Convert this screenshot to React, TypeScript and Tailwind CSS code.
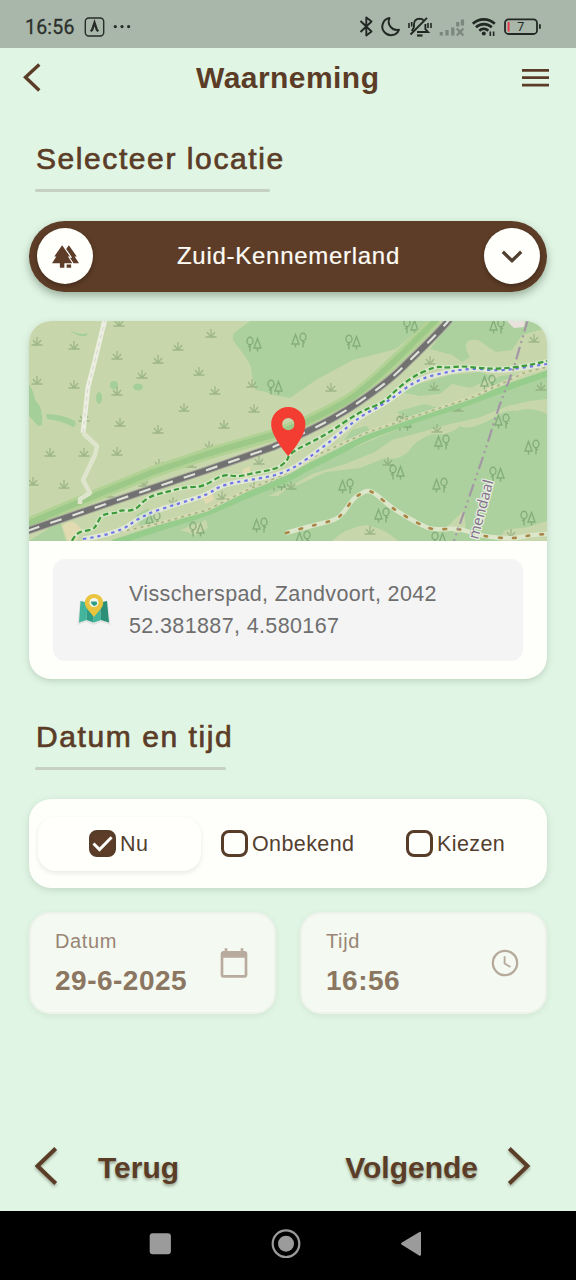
import React from "react";

const SANS = "font-['Liberation_Sans',Arial,sans-serif]";

type Pt = [number, number];

const grass: Pt[] = [
  [37, 341], [74, 345], [117, 355], [158, 359], [142, 374], [178, 346], [211, 333], [199, 371], [215, 390], [184, 407], [37, 380],
  [74, 384], [117, 391], [120, 422], [158, 429], [224, 424], [50, 452], [84, 452], [117, 451], [159, 463], [209, 445], [254, 408],
  [33, 481], [64, 484], [109, 493], [144, 482], [191, 463], [222, 495], [173, 501], [84, 417], [252, 383], [331, 387], [374, 383],
  [437, 428], [458, 407], [434, 386], [388, 461], [403, 417], [534, 338], [541, 386], [291, 485], [511, 533], [370, 530], [259, 460],
  [119, 322], [254, 486], [430, 360],
];

const trees: [number, number, boolean][] = [
  [254, 344, false], [275, 387, false], [299, 340, true], [353, 342, false], [497, 326, true], [488, 382, true], [442, 442, true],
  [502, 421, true], [532, 447, true], [397, 472, false], [346, 486, true], [497, 474, false], [440, 485, true], [382, 515, true],
  [528, 518, false], [260, 525, true], [197, 529, false], [303, 538, true], [439, 539, false], [153, 519, true], [278, 483, false],
  [411, 326, false], [404, 423, false],
];

function Grass({ x, y }: { x: number; y: number }) {
  return <path d={`M${x - 5.5} ${y + 4}h11M${x} ${y + 4}v-8M${x} ${y + 4}l-4 -5M${x} ${y + 4}l4 -5`} />;
}

function Trees({ x, y, flip }: { x: number; y: number; flip: boolean }) {
  return (
    <g transform={`translate(${x} ${y}) scale(${flip ? -1 : 1} 1)`}>
      <ellipse cx="-4" cy="-3" rx="3" ry="3.8" />
      <path d="M-4 0.5V7.5M-6 2l2 1.5M3.5 -5.5L0 4H7zM3.5 4v3.5" />
    </g>
  );
}

// Rounds the corners of a polyline by running quadratic curves through its segment midpoints.
function smooth(points: Pt[]): string {
  const last = points[points.length - 1];
  let d = `M${points[0][0]} ${points[0][1]}`;
  for (let i = 1; i < points.length - 1; i++) {
    const [x, y] = points[i];
    const [nx, ny] = points[i + 1];
    d += `Q${x} ${y} ${(x + nx) / 2} ${(y + ny) / 2}`;
  }
  return `${d}L${last[0]} ${last[1]}`;
}

const RAIL = "M27 531L103 505L153 488L207 470L273 447L306 432C325 423 343 413 359 402C375 391 388 382 402 368C416 354 434 338 450 319";
const BANK = "M27 524L77 503L153 472L207 454L273 435L306 422C325 413 340 406 353 397C372 383 388 367 400 356L437 319";
const SOUTH = smooth([[113, 543], [153, 530], [207, 513], [240, 498], [290, 478], [306, 468], [339, 452], [366, 437], [419, 418], [473, 401], [513, 385], [549, 373]]);
const GREEN = smooth([[72, 541], [76, 532], [93, 530], [97, 524], [102, 514], [118, 513], [120, 510], [135, 511], [147, 497], [170, 491], [186, 487], [203, 487], [223, 474], [238, 477], [253, 473], [277, 469], [288, 460], [289, 453], [326, 435], [359, 412], [383, 403], [396, 390], [412, 377], [436, 366], [446, 368], [460, 366], [480, 368], [499, 369], [525, 366], [547, 361]]);
const BLUE = smooth([[83, 539], [117, 534], [143, 515], [180, 503], [207, 495], [223, 484], [270, 477], [290, 470], [306, 460], [336, 437], [359, 417], [386, 403], [416, 380], [446, 372], [473, 368], [499, 371], [520, 368], [547, 364]]);
const FOOT = "M120 532L160 523L207 510L247 490L285 474L319 454L366 433L419 415L473 397L499 385L526 372L547 367";
const TRACK = smooth([[286, 533], [310, 526], [336, 520], [344, 512], [353, 499], [360, 494], [368, 490], [376, 494], [393, 509], [419, 524], [433, 530], [459, 528], [480, 536], [513, 539], [530, 535], [547, 534]]);

function MapView() {
  return (
    <svg viewBox="29 321 518 220" width="518" height="220" className="block shrink-0">
      <rect x="29" y="321" width="518" height="220" fill="#c8d7ab" />
      <g fill="#add19e">
        <path d="M250 321L234 333Q231 338 235 343Q240 349 246 358Q252 366 252 376Q255 386 255 390Q266 391 273 395L290 398L316 380L353 360L396 349L410 337L427 321Z" />
        <path d="M452 321L440 336L430 349L452 355L462 362L470 357Q464 348 467 342Q473 338 480 341L488 347L496 352L512 350L522 335L547 328V321Z" />
        <path d="M110 541L153 532L207 515L240 500L290 480L339 454L419 420L473 403L513 387L547 375V541Z" />
        <path d="M29 541L60 521L66 541ZM136 515L148 508L156 522L140 526ZM400 392L418 384L450 375L480 372L495 377L470 388L452 384L440 394L420 396ZM344 440L352 430L366 426L372 432L360 438ZM396 412L424 404L440 408L410 419ZM485 385L500 376L515 374L505 384Z" />
      </g>
      <g fill="#a5cf99">
        <path d="M29 384Q34 392 35 400Q44 408 42 425L38 426L29 416ZM46 414Q62 414 75 421Q77 426 73 427Q60 420 47 419ZM69 329Q78 336 88 333L86 336Q76 337 69 329Z" />
        <ellipse cx="138" cy="387" rx="5" ry="3.5" />
        <ellipse cx="99" cy="398" rx="3" ry="6" />
        <ellipse cx="114" cy="385" rx="4" ry="4" />
      </g>
      <g fill="#c8d7ab">
        <path d="M286 489L312 474L345 464L375 452L392 440L425 431L450 424L478 418L508 406L530 401L547 399V414Q530 406 517 411Q504 409 490 420Q468 431 460 426Q450 436 432 434Q415 440 408 452Q398 461 385 458L360 468L326 472L300 484Z" />
        <path d="M332 541Q345 528 366 525Q384 528 398 541ZM448 526L464 510L466 530L456 534ZM498 541L505 530L528 527L547 521V541ZM268 496L290 486L278 496Z" />
        <path d="M180 530L206 520L208 528L196 535Z" />
      </g>
      <path d="M62 526Q70 519 77 524L82 530L76 541H68ZM202 497L212 492L214 500L206 504ZM242 470L250 466L250 476L244 480Z" fill="#e2dab1" />
      <path d="M507 321L514 328L524 327L525 321Z" fill="#e9e2dc" />

      <g fill="none" stroke="#7c9a6c" strokeOpacity="0.55" strokeWidth="1.3">
        {grass.map(([x, y], i) => <Grass key={i} x={x} y={y} />)}
      </g>
      <g fill="none" stroke="#6a9a66" strokeOpacity="0.62" strokeWidth="1.4">
        {trees.map(([x, y, f], i) => <Trees key={i} x={x} y={y} flip={f} />)}
      </g>

      <g fill="none" strokeLinejoin="round">
        <path d={BANK} stroke="#b2d295" strokeWidth="12" />
        <path d={BANK} stroke="#9dc988" strokeWidth="6" />
        <path d={SOUTH} stroke="#97cd8c" strokeWidth="6.5" />
        <path d="M105 319L95 360L88 387L83 433" stroke="#eceee2" strokeWidth="4.8" />
        <path d="M105 319L95 360L88 387L83 433" stroke="#d6d7c8" strokeWidth="1" strokeDasharray="4 4" />
        <path d="M83 433L97 446L95 455L83 480L90 493L80 499L80 504" stroke="#dfe5cd" strokeWidth="4.5" />
        <path d={RAIL} stroke="#a9ab9c" strokeWidth="8" />
        <path d={RAIL} stroke="#727172" strokeWidth="6" />
        <path d={RAIL} stroke="#dfe2da" strokeWidth="2.2" strokeDasharray="12 11.5" strokeDashoffset="-1" />
        <path d={FOOT} stroke="#d9dcb9" strokeWidth="3.2" strokeOpacity="0.8" />
        <path d={FOOT} stroke="#a5b580" strokeWidth="1.6" strokeDasharray="3 4" />
        <path d={BLUE} stroke="#eef1ee" strokeWidth="5" strokeOpacity="0.65" />
        <path d={GREEN} stroke="#dcecd2" strokeWidth="4" strokeOpacity="0.7" />
        <path d={BLUE} stroke="#7076ea" strokeWidth="2.2" strokeDasharray="3.2 4" />
        <path d={GREEN} stroke="#3c9a3a" strokeWidth="2.2" strokeDasharray="5.5 3" />
        <path d={TRACK} stroke="#dce6ca" strokeWidth="4.5" />
        <path d={TRACK} stroke="#a98645" strokeWidth="2.6" strokeLinecap="round" strokeDasharray="2.5 11.5" />
        <path d="M528 319L514 367L499 407L483 457L454 541" stroke="#a397a5" strokeWidth="2.2" strokeDasharray="13 4 2 4 2 4" />
      </g>
      <text
        transform="translate(478 540) rotate(-75)"
        className="font-['Noto_Sans',sans-serif]"
        fontSize="14.8"
        fill="#85748a"
        stroke="#e7efe2"
        strokeWidth="2.4"
        strokeLinejoin="round"
        paintOrder="stroke"
      >
        mendaal
      </text>
      <path
        transform="translate(258.9 402.1) scale(2.45)"
        fill="#f43d32"
        d="M12 2C8.13 2 5 5.13 5 9c0 5.25 7 13 7 13s7-7.75 7-13c0-3.87-3.13-7-7-7zm0 9.5a2.5 2.5 0 1 1 0-5 2.5 2.5 0 0 1 0 5z"
      />
    </svg>
  );
}

function StatusBar() {
  return (
    <div className="flex h-12 shrink-0 items-center bg-[#a9b6aa] pl-[25px] pt-[5px]">
      <span className="font-['Roboto',sans-serif] text-[19.5px] leading-6 tracking-[0.2px] text-[#2a302b] [-webkit-text-stroke:0.3px_#2a302b] mt-0.5">16:56</span>
      <svg width="50" height="22" viewBox="84 15 50 22" className="ml-[9px]" fill="none" stroke="#262c27">
        <rect x="85.3" y="17" width="18.4" height="18" rx="3.5" strokeWidth="1.4" />
        <path d="M90.8 30.4l1.4-1.8 2.3-7 2.3 7 1.4 1.8M94.5 22v3.5" strokeWidth="2.3" />
        <g fill="#262c27" stroke="none">
          <circle cx="115.3" cy="25.6" r="1.6" /><circle cx="122" cy="25.6" r="1.6" /><circle cx="128.6" cy="25.6" r="1.6" />
        </g>
      </svg>
      <svg width="186" height="24" viewBox="358 14.5 186 24" className="ml-auto mr-8" fill="none" stroke="#222823" strokeWidth="2">
        <path d="M360.5 20.5L371.5 31L366.3 35V17L371.5 21L360.5 31.5" strokeWidth="1.9" strokeLinejoin="round" />
        <path d="M389.5 17.6a8.6 8.6 0 1 0 9.4 11.7a8.4 8.4 0 0 1 -9.4 -11.7z" strokeWidth="2" strokeLinejoin="round" />
        <g strokeWidth="1.9">
          <path d="M417 31.5h11l-2.6-2.8v-5.2M423.8 20c-2-2.300-6.400-2.300-8.600 0c-1.200 1.400-1.300 3.200-1.300 6.600l-2 4" />
          <path d="M427 17.300L410.500 34" />
          <path d="M417 35h5.500" strokeWidth="2.2" />
          <path d="M409 22.400v5M411.700 21.500v4.500M428 22.400v5M431 22.400v5" strokeWidth="1.6" />
        </g>
        <g stroke="#7b867d" strokeWidth="3.2">
          <path d="M441.300 35v-3.600M447 35v-5.500M452.800 35v-8M457.800 26v-4.500M462.500 25v-6" />
          <path d="M456.800 28l6.600 7M463.400 28l-6.600 7" strokeWidth="2.200" />
        </g>
        <g strokeWidth="2.6">
          <path d="M472.800 23.300c6.200-5.900 15.800-5.900 22 0" />
          <path d="M475.900 26.800c4.500-4.300 11.400-4.300 15.900 0" />
          <path d="M479.300 30.200c2.600-2.500 6.400-2.500 9 0" />
          <circle cx="483.800" cy="33" r="2" fill="#222823" stroke="none" />
          <path d="M490.300 31v4.600M493.600 31v4.600" strokeWidth="1.600" />
        </g>
        <rect x="505" y="18.900" width="32" height="14.600" rx="3.600" strokeWidth="1.800" />
        <path d="M508.600 21.500v9.500" stroke="#e83b4e" strokeWidth="2" />
        <path d="M539.900 23.700v4.600" strokeWidth="1.800" />
        <text x="517.300" y="30.900" fontSize="12.500" fill="#222823" stroke="none" className="font-['Roboto',sans-serif]">7</text>
      </svg>
    </div>
  );
}

function Heading({ text, line }: { text: string; line: string }) {
  return (
    <div className="flex h-[52px] flex-col pl-[6px]">
      <h2 className="h-[35px] whitespace-nowrap pl-px text-[30px] leading-[35px] tracking-[1.58px] text-[#5b3d27] [-webkit-text-stroke:0.7px_#5b3d27]">{text}</h2>
      <div className={`mt-[13px] h-[3px] rounded-full bg-[#c5d0c0] ${line}`} />
    </div>
  );
}

function Option({ label, checked = false }: { label: string; checked?: boolean }) {
  return (
    <>
      <span className={`flex size-[27px] shrink-0 items-center justify-center rounded-[8px] border-[3px] border-[#573c28] ${checked ? "bg-[#5d3d27]" : ""}`}>
        {checked && (
          <svg width="21" height="21" viewBox="0 0 21 21" fill="none" stroke="#fffffb" strokeWidth="2.9" className="shrink-0">
            <path d="M1.5 10.5L7.5 16.6L19.6 4.2" />
          </svg>
        )}
      </span>
      <span className="ml-1 mt-px whitespace-nowrap text-[21.5px] leading-7 tracking-[0.4px] text-[#54402f]">{label}</span>
    </>
  );
}

function Field({ label, value, children }: { label: string; value: string; children: React.ReactNode }) {
  return (
    <div className="flex h-[102px] w-[247px] items-center justify-between rounded-[21px] border-2 border-[#edf3ea] bg-[#f4f9f1] pl-6 pr-6 shadow-[0_2px_6px_rgba(60,90,50,0.09)]">
      <div className="-mt-px whitespace-nowrap">
        <div className="text-[20px] leading-6 tracking-[0.65px] text-[#988575]">{label}</div>
        <div className="mt-[12px] text-[28px] font-bold leading-8 tracking-[0.5px] text-[#8b7661]">{value}</div>
      </div>
      {children}
    </div>
  );
}

export default function App() {
  return (
    <div className={`flex h-[1280px] w-[576px] flex-col overflow-hidden bg-[#e1f5e4] ${SANS}`}>
      <StatusBar />
      <header className="flex h-[60px] shrink-0 items-center pl-[22px] pr-[27px]">
        <svg width="20" height="30" viewBox="0 0 20 30" fill="none" stroke="#5b3d27" strokeWidth="3.4">
          <path d="M17.3 1.5L3.5 14.3L17.3 27.5" />
        </svg>
        <h1 className="ml-[154px] text-[30px] font-bold leading-9 tracking-[0.45px] text-[#5b3d27]">Waarneming</h1>
        <svg width="27" height="20" viewBox="0 0 27 20" fill="#5b3d27" className="-mt-px ml-auto">
          <path d="M0 1h27v2.800H0zM0 8.300h27v2.800H0zM0 15.800h27v2.800H0z" />
        </svg>
      </header>

      <main className="flex flex-1 flex-col px-[29px] pt-[33px]">
        <Heading text="Selecteer locatie" line="w-[235px]" />

        <button className="mt-[28px] flex h-[70.5px] shrink-0 items-center justify-between rounded-full bg-[#5d3d27] pl-2 pr-[7px] shadow-[0_4px_8px_rgba(40,60,40,0.38)]">
          <span className="flex size-14 items-center justify-center rounded-full bg-[#fffffc] shadow-[0_2px_5px_rgba(0,0,0,0.3)]">
            <svg width="27" height="27" viewBox="0 0 24 24" fill="#5d3d27">
              <path d="M16 12L9 2L2 12h1.86L0 18h7v4h4v-4h7l-3.86-6H16zM20.14 12H22L15 2l-2.39 3.41L17.92 13h-1.95l3.22 5H24L20.14 12zM13 19h4v3h-4z" />
            </svg>
          </span>
          <span className="text-[24px] leading-8 tracking-[0.72px] text-[#fdfbf5] [-webkit-text-stroke:0.2px_#fdfbf5]">Zuid-Kennemerland</span>
          <span className="flex size-14 items-center justify-center rounded-full bg-[#fffffc] shadow-[0_2px_5px_rgba(0,0,0,0.3)]">
            <svg width="22" height="14" viewBox="0 0 22 14" fill="none" stroke="#54402f" strokeWidth="3.3" className="mt-0.5">
              <path d="M1.8 1.8L11 10.8L20.2 1.8" />
            </svg>
          </span>
        </button>

        <section className="mt-[29.5px] flex h-[358px] shrink-0 flex-col overflow-hidden rounded-[22px] bg-[#fefffb] shadow-[0_2px_7px_rgba(40,80,50,0.2)]">
          <MapView />
          <div className="mx-6 mt-[18px] flex h-[102px] items-center rounded-xl bg-[#f4f4f4] pl-6">
            <svg width="34" height="34" viewBox="0 0 34 34" className="shrink-0">
              <path d="M3 8L0.5 32L9 29L16.5 32L24 29L33.5 32L30.5 8L23 9.5L16.5 8L10 9.5Z" fill="#e0e4e1" />
              <path d="M3.500 8L2 29.500L9.500 27L10.500 9.500Z" fill="#43b59c" />
              <path d="M10.500 9.500L9.500 27L16.700 29.500V8Z" fill="#2f9d85" />
              <path d="M16.700 8V29.500L24 27L23 9.500Z" fill="#43b59c" />
              <path d="M23 9.500L24 27L32 29.500L30 8Z" fill="#2d8f77" />
              <path d="M17 1C11.500 1 7.800 5 7.800 10C7.800 15 13.500 19 17 24C20.500 19 26.200 15 26.200 10C26.200 5 22.500 1 17 1Z" fill="#e9c43f" />
              <circle cx="17" cy="9.500" r="4.600" fill="#f3f7ee" />
              <path d="M14 8.500h5.500l.8 2.500l-3 2.300l-2.800-2.300z" fill="#2f9d85" />
            </svg>
            <div className="ml-[18px] whitespace-nowrap text-[21.5px] leading-8 tracking-[0.37px] text-[#6e6e6e]">
              <div>Visscherspad, Zandvoort, 2042</div>
              <div>52.381887, 4.580167</div>
            </div>
          </div>
        </section>

        <div className="mt-[40px]">
          <Heading text="Datum en tijd" line="w-[191px]" />
        </div>

        <div className="mt-[28px] flex h-[89px] shrink-0 items-center rounded-[22px] bg-[#fefffb] pl-[9px] shadow-[0_2px_7px_rgba(40,80,50,0.17)]">
          <div className="flex h-[54px] w-[163px] items-center rounded-[18px] bg-[#fffffc] pl-[51px] shadow-[0_2px_5px_rgba(0,0,0,0.09)]">
            <Option label="Nu" checked />
          </div>
          <div className="flex w-[205px] items-center pl-5">
            <Option label="Onbekend" />
          </div>
          <div className="flex items-center">
            <Option label="Kiezen" />
          </div>
        </div>

        <div className="mt-[24px] flex shrink-0 justify-between">
          <Field label="Datum" value="29-6-2025">
            <svg width="32" height="32" viewBox="0 0 24 24" fill="#b9aa9e">
              <path d="M20 3h-1V1h-2v2H7V1H5v2H4c-1.100 0-2 .9-2 2v16c0 1.100.9 2 2 2h16c1.100 0 2-.9 2-2V5c0-1.100-.9-2-2-2zm0 18H4V8h16v13z" />
            </svg>
          </Field>
          <Field label="Tijd" value="16:56">
            <svg width="32" height="32" viewBox="0 0 24 24" fill="none" stroke="#b6aa9c">
              <circle cx="12" cy="12" r="9.100" strokeWidth="1.700" />
              <path d="M11.700 7v5.400l4.400 2.600" strokeWidth="1.400" />
            </svg>
          </Field>
        </div>
      </main>

      <footer className="flex h-[88px] shrink-0 items-center pl-[33px] pr-[44px] text-[30px] font-bold leading-9 text-[#5b3d27] [text-shadow:0_2px_3px_rgba(60,60,40,0.45)]">
        <svg width="26" height="40" viewBox="0 0 26 40" fill="none" stroke="#5b3d27" strokeWidth="4" className="drop-shadow-[0_2px_1.5px_rgba(60,60,40,0.4)]">
          <path d="M22.700 1.500L4.500 19L22.700 36.500" />
        </svg>
        <span className="ml-[39px] mt-px">Terug</span>
        <span className="ml-auto mt-px">Volgende</span>
        <svg width="26" height="40" viewBox="0 0 26 40" fill="none" stroke="#5b3d27" strokeWidth="4" className="ml-[28px] drop-shadow-[0_2px_1.5px_rgba(60,60,40,0.4)]">
          <path d="M3.300 1.500L21.500 19L3.300 36.500" />
        </svg>
      </footer>

      <nav className="flex h-[69px] shrink-0 items-center bg-black pl-[149px]">
        <svg width="274" height="32" viewBox="149 1228 274 32" fill="#9b9b9b" className="-mt-[3px]">
          <rect x="149.700" y="1233.300" width="21.200" height="21" rx="3" />
          <circle cx="286" cy="1243.700" r="13.300" fill="none" stroke="#9b9b9b" strokeWidth="2.200" />
          <circle cx="286" cy="1243.700" r="8" />
          <path d="M402 1243.700L420 1232.800V1254.800Z" stroke="#9b9b9b" strokeWidth="2" strokeLinejoin="round" />
        </svg>
      </nav>
    </div>
  );
}
